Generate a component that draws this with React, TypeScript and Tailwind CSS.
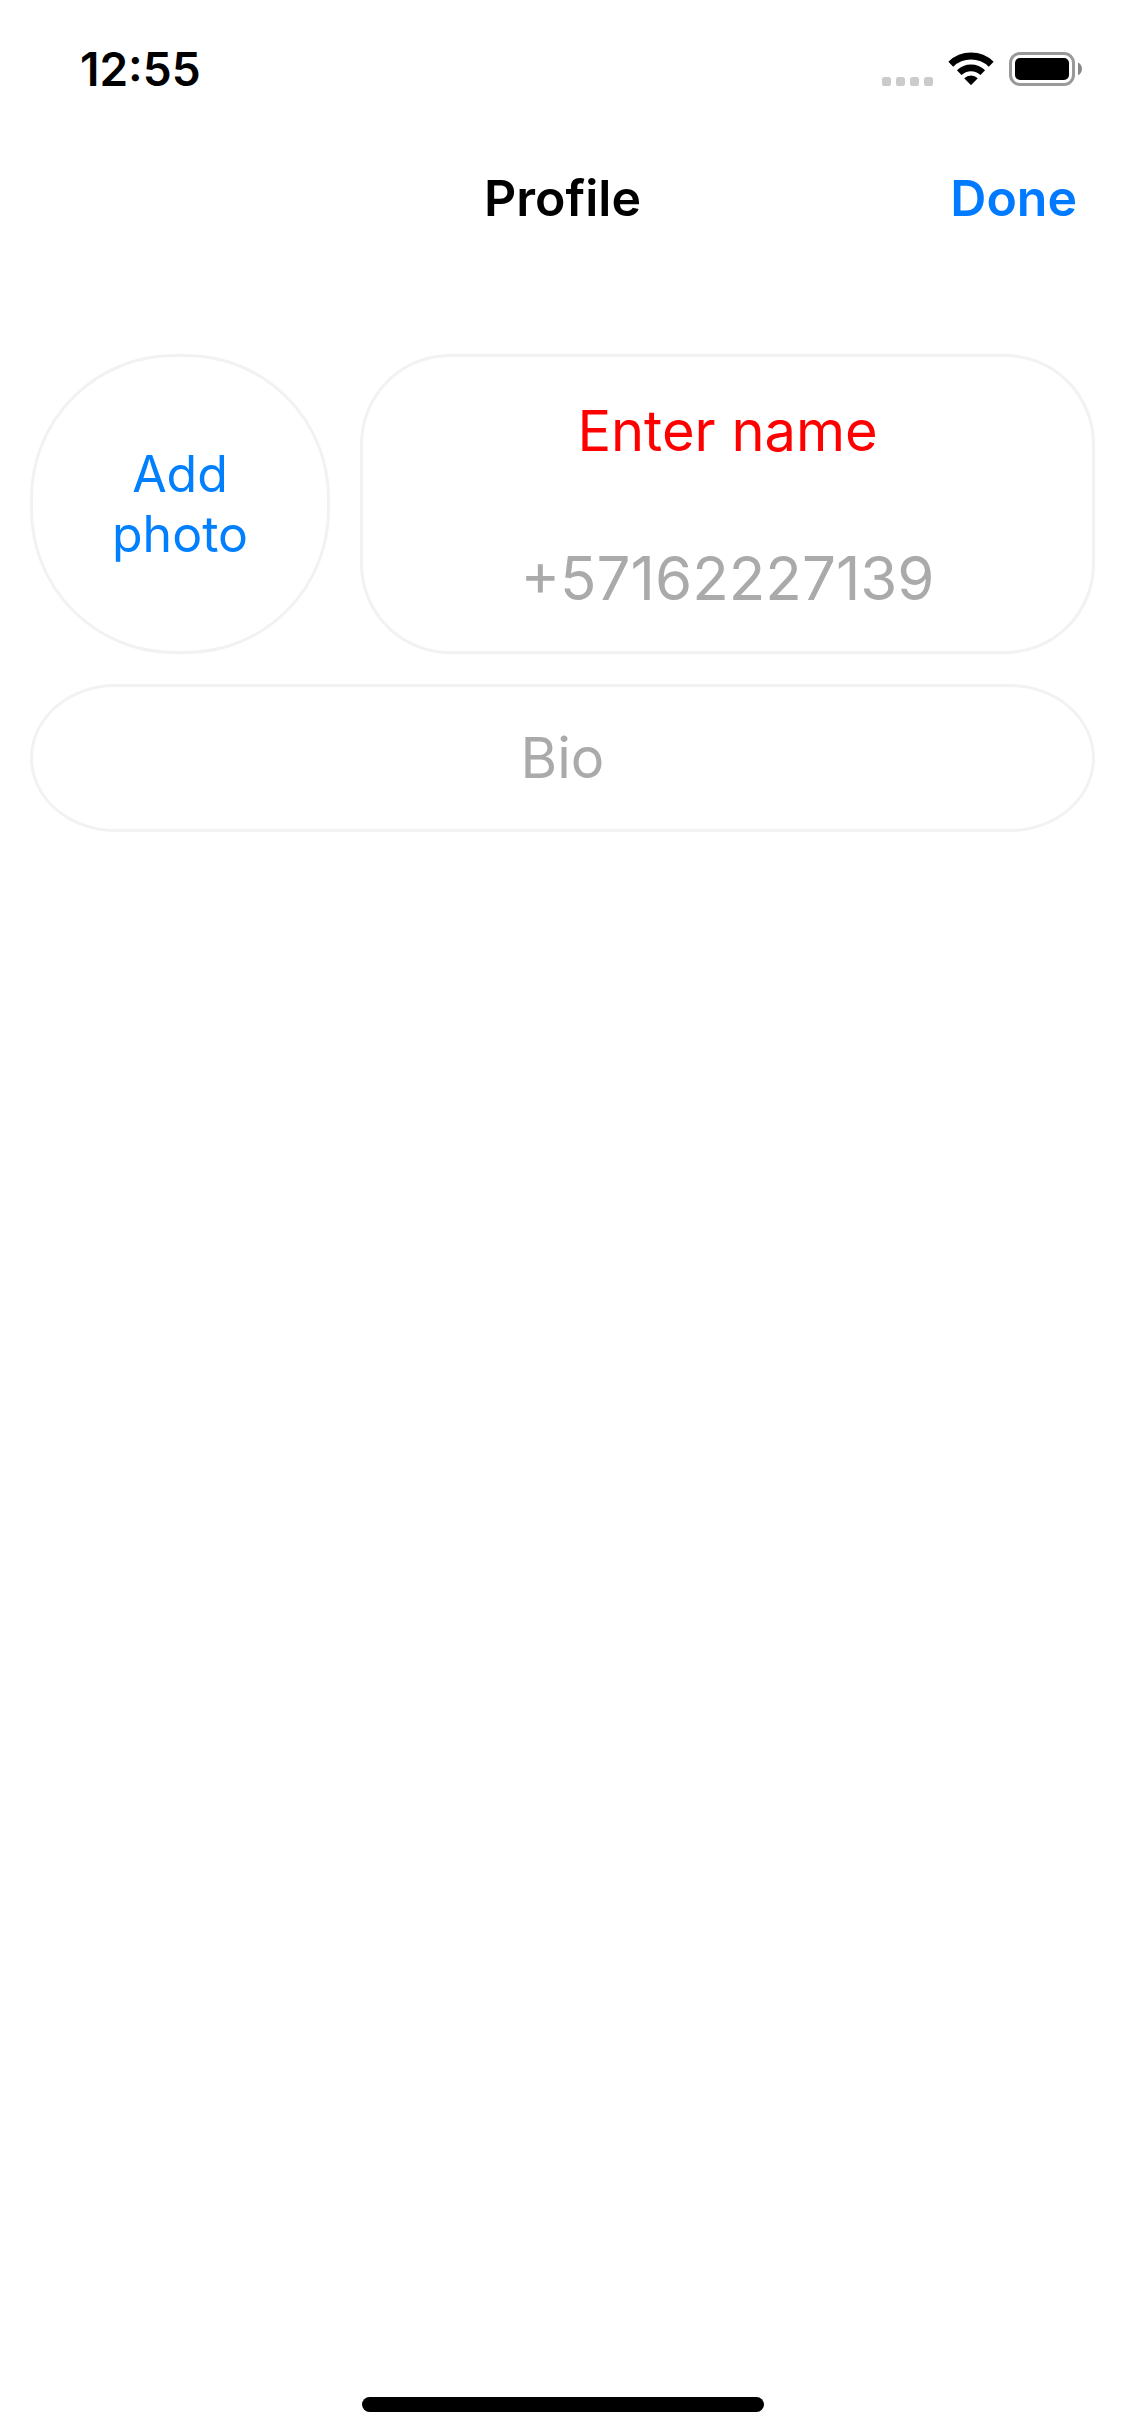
import { useState } from 'react';

function SignalDots() {
  return (
    <svg width="51" height="9" viewBox="0 0 51 9" fill="#cbcbcb" aria-hidden="true">
      {[0, 14, 28, 42].map((x) => (
        <rect key={x} x={x} y="0" width="9" height="9" rx="2.6" />
      ))}
    </svg>
  );
}

function WifiIcon() {
  return (
    <svg width="46" height="34" viewBox="0 0 46 34" fill="none" aria-hidden="true">
      <path d="M2.8 12.2A29.2 29.2 0 0 1 43.2 12.2" stroke="#000" strokeWidth="7" />
      <path d="M11.2 20.6A17.2 17.2 0 0 1 34.8 20.6" stroke="#000" strokeWidth="6.6" />
      <path d="M16.2 26.3A9.8 9.8 0 0 1 29.8 26.3L23.7 32.6Q23 33.3 22.3 32.6Z" fill="#000" />
    </svg>
  );
}

function BatteryIcon() {
  return (
    <svg width="73" height="34" viewBox="0 0 73 34" fill="none" aria-hidden="true">
      <rect x="1.5" y="1.5" width="63" height="31" rx="9.5" stroke="#999" strokeWidth="3" />
      <rect x="6" y="6" width="54" height="22" rx="5" fill="#000" />
      <path d="M69 10.6C71.4 11.8 73 14.2 73 17S71.4 22.2 69 23.2Z" fill="#888" />
    </svg>
  );
}

function StatusBar() {
  return (
    <div className="flex h-[138px] items-center justify-between pr-[43px] pl-20">
      <time className="text-[46px] leading-none font-semibold">12:55</time>
      <div className="flex items-end gap-[15px]">
        <SignalDots />
        <WifiIcon />
        <BatteryIcon />
      </div>
    </div>
  );
}

function NavBar() {
  return (
    <header className="grid h-[120px] grid-cols-3 items-center px-12 text-[50px] leading-[60px] font-semibold">
      <span />
      <h1 className="text-center">Profile</h1>
      <button type="button" className="justify-self-end text-[#007aff]">
        Done
      </button>
    </header>
  );
}

export default function App() {
  const [name, setName] = useState('');
  const [bio, setBio] = useState('');

  return (
    <div className="flex min-h-screen flex-col bg-white font-['Inter',sans-serif] text-black">
      <StatusBar />
      <NavBar />
      <main className="flex flex-1 flex-col gap-[30px] px-[30px] pt-24">
        <div className="flex gap-[30px]">
          <button
            type="button"
            className="flex size-[300px] shrink-0 items-center justify-center rounded-[144px] border-3 border-[#f2f2f2] px-16 text-center text-[50px] leading-[60px] text-[#007fff]"
          >
            Add photo
          </button>
          <div className="flex min-w-0 flex-1 flex-col rounded-[90px] border-3 border-[#f2f2f2]">
            <input
              type="text"
              aria-label="Name"
              placeholder="Enter name"
              value={name}
              onChange={(event) => setName(event.target.value)}
              className="min-h-0 w-full flex-1 bg-transparent text-center text-[56px] outline-none placeholder:text-[#ff0000]"
            />
            <p className="flex flex-1 items-center justify-center text-[60px] leading-[60px] text-[#aaaaaa]">
              +57162227139
            </p>
          </div>
        </div>
        <input
          type="text"
          aria-label="Bio"
          placeholder="Bio"
          value={bio}
          onChange={(event) => setBio(event.target.value)}
          className="h-[148px] w-full rounded-[85px/74px] border-3 border-[#f2f2f2] bg-transparent text-center text-[56px] outline-none placeholder:text-[#aaaaaa]"
        />
      </main>
      <footer className="flex justify-center pb-6">
        <div className="h-[15px] w-[402px] rounded-full bg-black" />
      </footer>
    </div>
  );
}
